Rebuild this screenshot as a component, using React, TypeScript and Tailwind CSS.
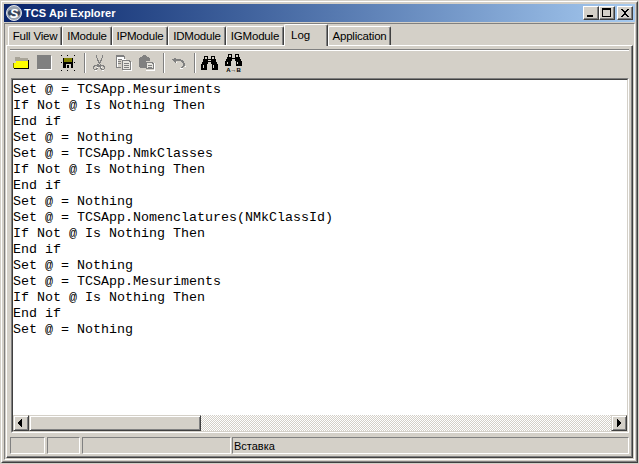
const lines = [
  "Set @ = TCSApp.Mesuriments",
  "If Not @ Is Nothing Then",
  "End if",
  "Set @ = Nothing",
  "Set @ = TCSApp.NmkClasses",
  "If Not @ Is Nothing Then",
  "End if",
  "Set @ = Nothing",
  "Set @ = TCSApp.Nomenclatures(NMkClassId)",
  "If Not @ Is Nothing Then",
  "End if",
  "Set @ = Nothing",
  "Set @ = TCSApp.Mesuriments",
  "If Not @ Is Nothing Then",
  "End if",
  "Set @ = Nothing",
];

const tabs = [
  { label: "Full View", w: "w-[54px]" },
  { label: "IModule", w: "w-[50px]" },
  { label: "IPModule", w: "w-[56px]" },
  { label: "IDModule", w: "w-[58px]" },
  { label: "IGModule", w: "w-[58px]" },
];

function Tab({ label, w }: { label: string; w: string }) {
  return (
    <div className={`${w} h-[19px] flex items-center justify-center pt-[2px] rounded-t-[2px] border-t border-l border-r border-t-white border-l-white border-r-[#404040] shadow-[inset_-1px_0_#808080] text-[11.5px] tracking-[-0.2px] text-black whitespace-nowrap`}>
      {label}
    </div>
  );
}

function CapButton({ kind }: { kind: "min" | "max" | "close" }) {
  return (
    <div className="w-4 h-[14px] bg-[#d4d0c8] border-r border-b border-r-[#404040] border-b-[#404040] border-t border-l border-t-white border-l-white shadow-[inset_-1px_-1px_#808080] flex items-center justify-center">
      <svg width="12" height="10" viewBox="0 0 12 10" shapeRendering="crispEdges">
        {kind === "min" && <rect x="2" y="7" width="6" height="2" fill="#000" />}
        {kind === "max" && <path d="M1 0h9v9H1zM2 2v6h7V2z" fill="#000" fillRule="evenodd" />}
        {kind === "close" && (
          <path d="M2 1h2v1h1v1h2V2h1V1h2v1H9v1H8v1H7v2h1v1h1v1h1v1H8V8H7V7H5v1H4v1H2V8h1V7h1V6h1V4H4V3H3V2H2z" fill="#000" />
        )}
      </svg>
    </div>
  );
}

function Sep({ className }: { className: string }) {
  return <div className={`${className} w-[2px] h-[20px] border-l border-r border-l-[#808080] border-r-white`} />;
}

function Folder() {
  return (
    <svg className="ml-[3px]" width="16" height="12" viewBox="0 0 16 12" shapeRendering="crispEdges">
      <path d="M2 0h5v1h8v3H2z" fill="#a8a498" />
      <path d="M3 4h12v7H1V6h2z" fill="#ffff00" />
      <path d="M15 3h1v9H1v-1h14z" fill="#000" />
      <path d="M0 6h1v5H0z" fill="#808000" />
    </svg>
  );
}

function Stop() {
  return (
    <svg className="ml-2" width="15" height="15" viewBox="0 0 15 15" shapeRendering="crispEdges">
      <path d="M1 1h14v14H1z" fill="#fff" />
      <path d="M0 0h14v14H0z" fill="#808080" />
    </svg>
  );
}

function Save() {
  return (
    <svg className="ml-[9px]" width="14" height="16" viewBox="0 0 14 16" shapeRendering="crispEdges">
      <path d="M0 0h1v1H0zM6 0h1v1H6zM13 0h1v1h-1zM0 15h1v1H0zM6 15h1v1H6zM13 15h1v1h-1zM0 7h1v1H0zM13 7h1v1h-1z" fill="#000" />
      <path d="M2 3h10v10H2z" fill="#000" />
      <path d="M3 3h8v4H3z" fill="#808000" />
      <path d="M5 9h5v4H5z" fill="#d4d0c8" />
      <path d="M6 10h2v3H6z" fill="#000" />
    </svg>
  );
}

function Cut() {
  return (
    <svg className="ml-[7px]" width="13" height="16" viewBox="0 0 13 16" shapeRendering="crispEdges">
      <path d="M3 0h1v3h1v2h1v2h1V5h1V3h1V0h1v3H9v3H8v2H7v1H6V8H5V6H4V3H3z" fill="#808080" />
      <path d="M5 9h1v1h1v1H6v1H5v2H4v1H1v-1H0v-3h1v-1h3v-1h1zM2 11v1H1v2h2v-1h1v-2z" fill="#808080" fillRule="evenodd" />
      <path d="M7 9h1v1h3v1h1v3h-1v1H8v-1H7v-2H6v-1h1zM8 11v2h1v1h2v-2h-1v-1z" fill="#808080" fillRule="evenodd" />
      <path d="M4 12h1v1H4zM8 12h1v1H8zM2 15h2v1H2zM9 15h2v1H9z" fill="#fff" />
    </svg>
  );
}

function Copy() {
  return (
    <svg className="ml-[10px]" width="16" height="16" viewBox="0 0 16 16" shapeRendering="crispEdges">
      <path d="M1 1h8v3h1v1H2v8H1z" fill="#fff" />
      <path d="M0 0h8v1h1v3H8V2H1v10h4v1H0z" fill="#808080" />
      <path d="M2 4h4v1H2zM2 6h3v1H2zM2 8h3v1H2z" fill="#808080" />
      <path d="M6 5h8v1h1v9H6zM7 6v8h7V7h-1V6z" fill="#808080" fillRule="evenodd" />
      <path d="M7 6h6v1h1v7H7z" fill="#e8e6e0" />
      <path d="M8 8h5v1H8zM8 10h5v1H8zM8 12h5v1H8z" fill="#808080" />
      <path d="M7 15h9v1H7zM15 7h1v8h-1z" fill="#fff" />
    </svg>
  );
}

function Paste() {
  return (
    <svg className="ml-[6px]" width="17" height="16" viewBox="0 0 17 16" shapeRendering="crispEdges">
      <path d="M2 2h2V1h1V0h3v1h1v1h2v1h1v3h-4v7H2V12H1V3h1z" fill="#808080" />
      <path d="M8 7h7v1h1v6H8zM9 8v5h6V9h-1V8z" fill="#808080" fillRule="evenodd" />
      <path d="M9 8h5v1h1v4H9z" fill="#e8e6e0" />
      <path d="M10 10h4v1h-4zM10 12h4v1h-4z" fill="#808080" />
      <path d="M8 15h9v1H8zM16 8h1v7h-1z" fill="#fff" />
    </svg>
  );
}

function Undo() {
  return (
    <svg className="ml-[6px]" width="15" height="12" viewBox="0 0 15 12" shapeRendering="crispEdges">
      <path d="M4 1h1v1h5v1h2v1h1v2h1v3h-1v1h-1v1h-2v-1h1V9h1V6h-1V5h-1V4H5v2H4V5H3V4H2V3H1V2h2V1z" fill="#808080" />
      <path d="M5 5h1v1H5zM14 9h1v1h-1zM9 11h3v1H9z" fill="#fff" />
    </svg>
  );
}

const binocBody = "M3 0h4v3h3V0h4v3h1v3h1v2h1v6h-6V8h-1V6H7v2H6v6H0V8h1V6h1V3h1z";
const binocLights = "M4 1h2v2H4zM11 1h2v2h-2zM7 4h3v1H7zM2 9h1v3H2zM12 9h1v3h-1z";

function Binoc({ ab, className }: { ab?: boolean; className: string }) {
  return (
    <svg className={className} width="17" height="18" viewBox="0 0 17 18" shapeRendering="crispEdges">
      <g transform={ab ? "scale(1 0.85)" : "translate(0 2)"}>
        <path d={binocBody} fill="#000" />
        <path d={binocLights} fill="#d4d0c8" />
      </g>
      {ab && (
        <text x="8.5" y="18" textAnchor="middle" fontSize="6" fontWeight="700" fontFamily="'Liberation Sans', sans-serif" fill="#000">
          A→B
        </text>
      )}
    </svg>
  );
}

function ScrollBtn({ dir }: { dir: "l" | "r" }) {
  return (
    <div className="w-4 h-4 shrink-0 bg-[#d4d0c8] border-t border-l border-b border-r border-t-[#d4d0c8] border-l-[#d4d0c8] border-b-[#404040] border-r-[#404040] shadow-[inset_1px_1px_#fff,inset_-1px_-1px_#808080] flex items-center justify-center">
      <svg width="6" height="8" viewBox="0 0 6 8" shapeRendering="crispEdges">
        {dir === "l" ? (
          <path d="M3 0h1v8H3V7H2V6H1V5H0V3h1V2h1V1h1z" fill="#000" />
        ) : (
          <path d="M1 0h1v1h1v1h1v1h1v2H4v1H3v1H2v1H1z" fill="#000" />
        )}
      </svg>
    </div>
  );
}

function StatusPanel({ w, children }: { w: string; children?: string }) {
  return (
    <div className={`${w} h-[17px] border border-t-[#808080] border-l-[#808080] border-r-white border-b-white text-[11px] leading-[17px] pl-[1px] text-black`}>
      {children}
    </div>
  );
}

export default function App() {
  return (
    <div className="w-[639px] h-[464px] overflow-hidden bg-[#d4d0c8] border border-[#d4d0c8] font-['Liberation_Sans',sans-serif]">
      <div className="h-full border border-t-white border-l-white border-r-[#404040] border-b-[#404040]">
        <div className="h-full flex flex-col border border-t-[#d4d0c8] border-l-[#d4d0c8] border-r-[#808080] border-b-[#808080] p-[1px]">
          <div className="h-[18px] shrink-0 flex items-center bg-gradient-to-r from-[#0a246a] to-[#a6caf0] pl-[2px] pr-[2px]">
            <svg width="16" height="16" viewBox="0 0 16 16">
              <circle cx="8" cy="8" r="7.5" fill="#9aa3b0" stroke="#dfe3ea" strokeWidth="1" />
              <rect x="2" y="5" width="12" height="6" rx="3" fill="#39465c" />
              <text x="8" y="12.5" textAnchor="middle" fontSize="13" fontWeight="700" fontStyle="italic" fontFamily="'Liberation Sans', sans-serif" fill="#fff">
                S
              </text>
            </svg>
            <span className="ml-[2px] text-white font-bold text-[11px] tracking-[0.1px] whitespace-nowrap">TCS Api Explorer</span>
            <div className="ml-auto flex items-center">
              <CapButton kind="min" />
              <CapButton kind="max" />
              <div className="w-[2px]" />
              <CapButton kind="close" />
            </div>
          </div>
          <div className="mt-[1px] flex-1 min-h-0 flex flex-col border border-t-[#808080] border-l-[#808080] border-r-white border-b-white px-[1px] pb-[1px]">
            <div className="h-[21px] shrink-0 flex items-end pl-[2px] relative z-10">
              {tabs.map((t) => (
                <Tab key={t.label} label={t.label} w={t.w} />
              ))}
              <div className="w-[44px] h-[22px] -mb-[1px] bg-[#d4d0c8] flex items-start pl-[6px] pt-[3px] rounded-t-[2px] border-t border-t-white border-l border-l-white border-r border-r-[#404040] shadow-[inset_-1px_0_#808080] text-[11.5px] leading-[14px] text-black">
                Log
              </div>
              <Tab label="Application" w="w-[63px]" />
            </div>
            <div className="flex-1 min-h-0 flex flex-col border-t border-l border-t-white border-l-white border-r border-b border-r-[#404040] border-b-[#404040] shadow-[inset_-1px_-1px_#808080] pl-[3px] pr-[3px] pt-[3px] pb-[3px]">
              <div className="h-[29px] shrink-0 flex items-center pb-[3px] border-t border-t-[#808080] shadow-[inset_0_1px_#fff]">
                <Folder />
                <Stop />
                <Save />
                <Sep className="ml-[9px]" />
                <Cut />
                <Copy />
                <Paste />
                <Sep className="ml-2" />
                <Undo />
                <Sep className="ml-2" />
                <Binoc className="ml-[5px]" />
                <Binoc ab className="ml-[7px]" />
              </div>
              <div className="ml-[1px] flex-1 min-h-0 flex flex-col border border-t-[#808080] border-l-[#808080] border-r-white border-b-white">
                <div className="flex-1 min-h-0 flex flex-col border border-t-[#404040] border-l-[#404040] border-r-[#d4d0c8] border-b-[#d4d0c8]">
                  <div className="flex-1 min-h-0 bg-white pt-[2px] font-['Liberation_Mono',monospace] text-[13.33px] leading-4 text-black">
                    {lines.map((l, i) => (
                      <div key={i} className="whitespace-pre">
                        {l}
                      </div>
                    ))}
                  </div>
                  <div className="h-4 shrink-0 flex bg-[repeating-conic-gradient(#d4d0c8_0_25%,#ffffff_0_50%)] bg-[length:2px_2px]">
                    <ScrollBtn dir="l" />
                    <div className="w-[172px] h-4 bg-[#d4d0c8] border-t border-l border-t-[#d4d0c8] border-l-[#d4d0c8] border-r border-b border-r-[#404040] border-b-[#404040] shadow-[inset_1px_1px_#fff,inset_-1px_-1px_#808080]" />
                    <div className="flex-1" />
                    <ScrollBtn dir="r" />
                  </div>
                </div>
              </div>
              <div className="h-[17px] mt-1 shrink-0 flex">
                <StatusPanel w="w-[35px]" />
                <StatusPanel w="w-[33px] ml-[2px]" />
                <StatusPanel w="w-[149px] ml-[2px]" />
                <StatusPanel w="flex-1 ml-[1px]">Вставка</StatusPanel>
              </div>
            </div>
          </div>
        </div>
      </div>
    </div>
  );
}
